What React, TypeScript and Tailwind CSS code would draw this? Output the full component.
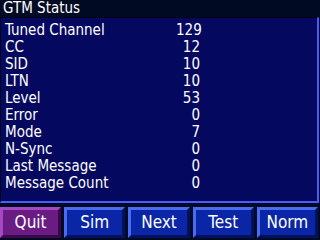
import React from 'react';

// GTM status screen: title, readout panel, soft-key row

const rows: Array<[string, number]> = [
  ['Tuned Channel', 129],
  ['CC', 12],
  ['SID', 10],
  ['LTN', 10],
  ['Level', 53],
  ['Error', 0],
  ['Mode', 7],
  ['N-Sync', 0],
  ['Last Message', 0],
  ['Message Count', 0],
];

const keys = ['Quit', 'Sim', 'Next', 'Test', 'Norm'];

export default function App() {
  return (
    <div
      className="w-[320px] h-[240px] bg-[#000a22] text-white overflow-hidden flex flex-col"
      style={{ fontFamily: '"DejaVu Sans Condensed", "DejaVu Sans", sans-serif' }}
    >
      <div className="h-[16px] pl-[3px] text-[15px] leading-[16px]">GTM Status</div>

      <div className="mt-[1px] h-[186px] w-[319px] bg-[#04085e] border-l border-t border-l-[#00031a] border-t-[#00031a] border-r-2 border-b-2 border-r-[#4a5cff] border-b-[#4a5cff] pt-[4px]">
        {rows.map(([label, value]) => (
          <div key={label} className="flex h-[17px] items-center text-[15px] leading-none">
            <span className="w-[175px] pl-[4px]">{label}</span>
            <span className="w-[24px] text-right">{value}</span>
          </div>
        ))}
      </div>

      <div className="mt-[4px] flex gap-[3px] w-[318px]">
        {keys.map((k) => {
          const quit = k === 'Quit';
          return (
            <div
              key={k}
              className={
                quit
                  ? 'flex-1 h-[31px] flex items-center justify-center text-[17px] bg-[#6a1c82] border-[3px] border-t-[#a448c4] border-l-[#a448c4] border-b-[#3a0848] border-r-[#3a0848]'
                  : 'flex-1 h-[31px] flex items-center justify-center text-[17px] bg-[#0a26a6] border-[3px] border-t-[#4a6cf0] border-l-[#4a6cf0] border-b-[#021060] border-r-[#021060]'
              }
            >
              {k}
            </div>
          );
        })}
      </div>
    </div>
  );
}
